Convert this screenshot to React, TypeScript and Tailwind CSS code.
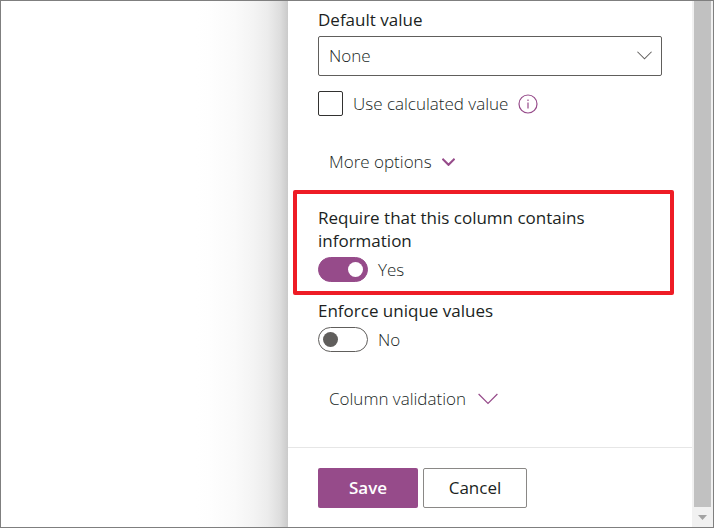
import { useState } from 'react';

function Chevron({ className, strokeWidth = 1 }: { className: string; strokeWidth?: number }) {
    return (
        <svg viewBox="0 0 20 12" className={className} fill="none" stroke="currentColor" strokeWidth={strokeWidth} aria-hidden="true">
            <path d="M0.6 1 L10 10.4 L19.4 1" />
        </svg>
    );
}

type ToggleProps = {
    id: string;
    label: string;
    checked: boolean;
    onChange: (value: boolean) => void;
};

function Toggle({ id, label, checked, onChange }: ToggleProps) {
    return (
        <div>
            <label htmlFor={id} className="block font-medium leading-[23px] text-[#201f1e]">{label}</label>
            <div className="mt-[5px] flex items-center gap-[10px]">
                <input
                    id={id}
                    type="checkbox"
                    role="switch"
                    checked={checked}
                    onChange={(e) => onChange(e.target.checked)}
                    className="flex h-[25px] w-[50px] shrink-0 cursor-pointer appearance-none items-center rounded-full border border-[#605e5c] bg-white px-1 before:size-[15px] before:rounded-full before:bg-[#605e5c] checked:justify-end checked:border-[#964b8a] checked:bg-[#964b8a] checked:before:bg-white"
                />
                <span className="leading-[25px]">{checked ? 'Yes' : 'No'}</span>
            </div>
        </div>
    );
}

export default function App() {
    const [required, setRequired] = useState(true);
    const [unique, setUnique] = useState(false);

    return (
        <div className="flex min-h-screen border border-[#7f7f7f] bg-white font-['Open_Sans',sans-serif] text-[17px] font-light text-[#201f1e]">
            {/* Page behind the panel, darkened by its shadow */}
            <div className="flex flex-1 justify-end">
                <div className="w-[92px] bg-[linear-gradient(to_left,#cacaca_0%,#dedede_9%,#ececec_22%,#f4f4f4_38%,#fafafa_58%,#fefefe_85%,#ffffff_100%)]" />
            </div>

            <main className="flex w-[404px] shrink-0 flex-col">
                <div className="flex-1 px-[30px] pt-[7px]">
                    <label htmlFor="default-value" className="block font-medium leading-[23px] text-[#201f1e]">Default value</label>
                    <div className="relative mt-[5px]">
                        <select
                            id="default-value"
                            className="h-10 w-full appearance-none rounded-xs border border-[#605e5c] bg-white pl-[10px] pr-10"
                        >
                            <option>None</option>
                        </select>
                        <Chevron className="pointer-events-none absolute right-[10px] top-[15px] h-[9px] w-[15px] text-[#605e5c]" strokeWidth={1.4} />
                    </div>

                    <div className="mt-[15px] flex items-center">
                        <input
                            id="calculated"
                            type="checkbox"
                            className="size-[25px] shrink-0 appearance-none rounded-xs border border-[#323130] bg-white checked:bg-[#964b8a]"
                        />
                        <label htmlFor="calculated" className="ml-[10px] leading-[25px]">Use calculated value</label>
                        <button type="button" aria-label="Information" className="ml-[10px] text-[#964b8a]">
                            <svg viewBox="0 0 20 20" className="size-5" fill="none" stroke="currentColor" strokeWidth="1.2">
                                <circle cx="10" cy="10" r="9" />
                                <path d="M10 8.5 V14.5 M10 5.5 V7" />
                            </svg>
                        </button>
                    </div>

                    <button type="button" className="ml-[11px] mt-[33px] flex items-center gap-[10px] leading-[25px]">
                        More options
                        <Chevron className="h-2 w-[13px] text-[#964b8a]" strokeWidth={3.2} />
                    </button>

                    <div className="-ml-[25px] -mr-3 mt-4 rounded-xs border-4 border-[#ee1c25] pb-[9px] pl-[21px] pr-12 pt-3">
                        <Toggle
                            id="required"
                            label="Require that this column contains information"
                            checked={required}
                            onChange={setRequired}
                        />
                    </div>

                    <div className="mt-1">
                        <Toggle id="unique" label="Enforce unique values" checked={unique} onChange={setUnique} />
                    </div>

                    <button type="button" className="ml-[11px] mt-[34px] flex items-center gap-3 leading-[25px]">
                        Column validation
                        <Chevron className="h-3 w-5 text-[#964b8a]" strokeWidth={1.2} />
                    </button>
                </div>

                <div className="flex gap-[5px] border-t border-[#e6e6e6] px-[30px] pb-[19px] pt-5">
                    <button type="button" className="h-10 w-[100px] rounded-xs bg-[#964b8a] font-semibold text-white">Save</button>
                    <button type="button" className="h-10 w-[104px] rounded-xs border border-[#8a8886] bg-white font-medium text-[#201f1e]">Cancel</button>
                </div>
            </main>

            {/* Scrollbar */}
            <div className="flex w-[21px] shrink-0 flex-col bg-[#f1f1f1] px-[2px]" aria-hidden="true">
                <div className="flex-1 bg-[#c1c1c1]" />
                <div className="flex h-5 items-center justify-center">
                    <svg viewBox="0 0 9 5" className="h-[5px] w-[9px]" fill="#a3a3a3">
                        <path d="M0 0 H9 L4.5 5 Z" />
                    </svg>
                </div>
            </div>
        </div>
    );
}
